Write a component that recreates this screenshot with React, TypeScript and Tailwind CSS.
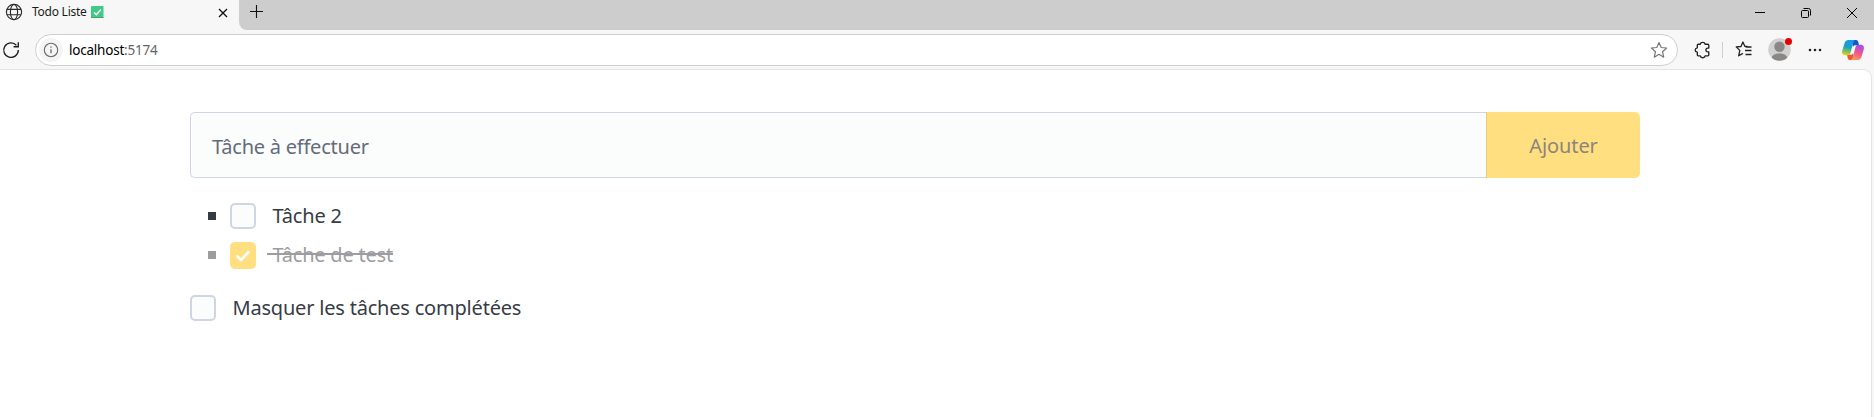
import React from "react";

function GlobeIcon() {
  return (
    <svg width="18" height="18" viewBox="0 0 18 18" fill="none" stroke="#2b2b2b" strokeWidth="1.15">
      <circle cx="9" cy="9" r="7.6" />
      <ellipse cx="9" cy="9" rx="3.6" ry="7.6" />
      <path d="M2 6.3h14M2 11.7h14" />
    </svg>
  );
}

function CheckEmoji() {
  return (
    <svg width="13" height="12" viewBox="0 0 13 12">
      <rect x="0" y="0" width="12.5" height="12" rx="0.8" fill="#41c988" />
      <rect x="0" y="11" width="12.5" height="1" fill="#4fa070" />
      <path d="M3 6.4l2.3 2.3 4.7-5.2" fill="none" stroke="#fff" strokeWidth="1.3" />
    </svg>
  );
}

function TabStrip() {
  return (
    <div className="flex h-[30px] bg-[#f7f7f7]">
      <div className="flex h-6 w-[239px] items-center">
        <div className="ml-[5px] w-[18px]"><GlobeIcon /></div>
        <span className="ml-[9px] w-[54px] whitespace-nowrap text-[12px] leading-6 tracking-[-0.25px] text-[#1b1b1b]">Todo Liste</span>
        <div className="ml-[5px]"><CheckEmoji /></div>
        <svg className="ml-[114px] mt-px" width="10" height="10" viewBox="0 0 10 10" fill="none" stroke="#111" strokeWidth="1.3">
          <path d="M1 1l8 8M9 1l-8 8" />
        </svg>
      </div>
      <div className="flex h-[30px] flex-1 rounded-bl-[8px] bg-[#cdcdcd]">
        <svg className="ml-[10px] mt-[4px]" width="15" height="15" viewBox="0 0 15 15" fill="none" stroke="#111" strokeWidth="1.1">
          <path d="M7.5 1v13M1 7.5h13" />
        </svg>
        <div className="ml-auto flex h-[26px] items-center">
          <svg width="10" height="10" viewBox="0 0 10 10" stroke="#000"><path d="M0 4.5h10" /></svg>
          <svg className="ml-[36px]" width="10" height="10" viewBox="0 0 10 10" fill="none" stroke="#000">
            <rect x="0.5" y="2.5" width="7" height="7" rx="1" />
            <path d="M2.5 0.5h5a2 2 0 0 1 2 2v5" />
          </svg>
          <svg className="ml-[36px] mr-[17px]" width="10" height="10" viewBox="0 0 10 10" stroke="#000"><path d="M0 0l10 10M10 0L0 10" /></svg>
        </div>
      </div>
    </div>
  );
}

function CopilotIcon() {
  return (
    <svg width="22" height="20" viewBox="0 0 22 20">
      <defs>
        <linearGradient id="cool" x1="0.5" y1="0" x2="0.3" y2="1">
          <stop offset="0" stopColor="#149ae8" />
          <stop offset="0.45" stopColor="#1aa0c8" />
          <stop offset="0.72" stopColor="#6cc067" />
          <stop offset="1" stopColor="#f2cb16" />
        </linearGradient>
        <linearGradient id="warm" x1="0.7" y1="0" x2="0.3" y2="1">
          <stop offset="0" stopColor="#a54cf0" />
          <stop offset="0.5" stopColor="#ee5590" />
          <stop offset="1" stopColor="#ff9a55" />
        </linearGradient>
      </defs>
      <path d="M8.5 7h5l-1.5 6.5H8z" fill="#fff" />
      <path d="M10 0h4c1.3 0 1.9.8 2.2 1.8L17 5.200h-3.800c-1.200 0-1.800.6-2.200 2z" fill="#1554cb" />
      <path d="M12 20H8c-1.300 0-1.900-.8-2.200-1.800L5 14.800h3.800c1.200 0 1.800-.6 2.200-2z" fill="#ee5539" />
      <path d="M6.500 0h7c-1.200.300-1.700 1.200-2.100 2.500L8.600 12.500c-.5 1.800-1.300 2.700-2.900 2.700H3C.5 15.200-.3 13 .2 10.800L2.600 3C3.300 1 4.500 0 6.500 0z" fill="url(#cool)" />
      <path d="M15.500 20h-7c1.200-.3 1.700-1.200 2.100-2.500l2.800-10c.5-1.800 1.300-2.700 2.900-2.700H19c2.500 0 3.300 2.200 2.800 4.400L19.400 17c-.7 2-1.900 3-3.900 3z" fill="url(#warm)" />
      <path d="M11.200 6.800h1.900l-1.900 6.400H8.900z" fill="#fff" />
    </svg>
  );
}

function Toolbar() {
  return (
    <div className="flex h-[39px] items-center bg-[#f7f7f7]">
      <svg className="ml-[2px]" width="18" height="18" viewBox="0 0 18 18" fill="none" stroke="#1f1f1f" strokeWidth="1.35">
        <path d="M16.300 9A7.300 7.300 0 1 1 14.400 4.200M16.300 1.200v4.500h-4.700" />
      </svg>
      <div className="ml-[15px] mt-[1px] flex h-8 w-[1643px] items-center rounded-full border border-[#cfcfcf] bg-white">
        <div className="ml-[3px] flex size-6 items-center justify-center rounded-full bg-[#f4f4f4]">
          <svg width="16" height="16" viewBox="0 0 16 16" fill="none" stroke="#6b6b6b" strokeWidth="1.1">
            <circle cx="8" cy="8" r="6.700" />
            <path d="M8 7.200v4M8 4.500v1.300" strokeWidth="1.3" />
          </svg>
        </div>
        <span className="ml-[6px] text-[13.5px] leading-[30px] tracking-[-0.22px] text-black">
          localhost<span className="text-[#666]">:5174</span>
        </span>
        <svg className="ml-auto mr-[9px]" width="18" height="18" viewBox="0 0 18 18" fill="none" stroke="#767676" strokeWidth="1.2" strokeLinejoin="round">
          <path d="M9 1.500l2.200 5 5.400.5-4.100 3.700 1.200 5.500L9 13.300l-4.700 2.900 1.200-5.500L1.400 7l5.400-.5z" />
        </svg>
      </div>
      <svg className="ml-[16px]" width="17" height="18" viewBox="0 0 17 18" fill="none" stroke="#222" strokeWidth="1.35" strokeLinejoin="round">
        <path d="M4.300 3.200h2C6.500 1.800 7.500 1.300 8.700 1.300s2.200.5 2.400 1.900h2.700q1 0 1 1v2.900h-1c-2.500 0-2.500 3.800 0 3.800h1v2.900q0 1-1 1h-2.700c-.2 1.400-1.200 1.900-2.400 1.900s-2.200-.5-2.400-1.900h-2q-1 0-1-1v-2.600C1.900 11 1.200 10.200 1.200 9s.7-2 2.100-2.200V4.200q0-1 1-1z" />
      </svg>
      <div className="ml-[11px] h-4 w-px bg-[#cfcfcf]" />
      <svg className="ml-[12px]" width="17" height="17" viewBox="0 0 17 17" fill="none" stroke="#222" strokeWidth="1.3" strokeLinejoin="round">
        <path d="M12.500 5.500L9.800 5.300 7.900 1 6 5.500l-4.800.4 3.600 3.500-1.100 5.400 4.200-2.400M10.500 6h6M10 9.500h6.500M10.500 13.500h6" />
      </svg>
      <div className="relative ml-[15.5px] size-[23px]">
        <svg width="23" height="23" viewBox="0 0 23 23">
          <defs><clipPath id="avatar"><circle cx="11.5" cy="11.5" r="11.3" /></clipPath></defs>
          <g clipPath="url(#avatar)">
            <rect width="23" height="23" fill="#d2d0ce" />
            <circle cx="11.5" cy="8.7" r="5.2" fill="#8a8886" />
            <ellipse cx="11.5" cy="20.5" rx="8" ry="5.2" fill="#8a8886" />
          </g>
        </svg>
        <span className="absolute left-[17px] top-0 size-[7px] rounded-full bg-[#e80000]" />
      </div>
      <svg className="ml-[17.5px]" width="14" height="4" viewBox="0 0 14 4" fill="#222">
        <circle cx="2" cy="2" r="1.3" /><circle cx="7" cy="2" r="1.3" /><circle cx="12" cy="2" r="1.3" />
      </svg>
      <div className="ml-[20px]"><CopilotIcon /></div>
    </div>
  );
}

function Box({ checked = false }: { checked?: boolean }) {
  if (checked) {
    return (
      <span className="flex h-[27px] w-[26px] shrink-0 items-center justify-center rounded-[5px] bg-[#ffdf80]">
        <svg width="16" height="14" viewBox="0 0 16 14" fill="none" stroke="#fff" strokeWidth="2.6" strokeLinecap="round" strokeLinejoin="round">
          <path d="M2.500 7.500l3.500 3.500 7.500-8" />
        </svg>
      </span>
    );
  }
  return <span className="size-[26px] shrink-0 rounded-[5px] border-2 border-[#cfd5e2] bg-[#fbfcfc]" />;
}

export default function App() {
  return (
    <div className="h-[417px] w-[1874px] overflow-hidden bg-[#f7f7f7] font-['Noto_Sans',sans-serif]">
      <TabStrip />
      <Toolbar />
      <main className="h-[348px] w-[1872px] rounded-tr-[9px] border-r border-t border-[#e4e4e4] bg-white pl-[190px] pt-[42px] text-[20px] text-[#373c44]">
        <form className="flex h-[66px] w-[1450px]">
          <div className="flex w-[1296px] items-center rounded-l-[5px] border border-r-0 border-[#cfd5e2] bg-[#fbfcfc] pl-[21px] pt-[3px] text-[#646b79]">
            <span className="leading-6 tracking-[-0.23px]">Tâche à effectuer</span>
          </div>
          <button type="button" className="flex w-[154px] items-center justify-center rounded-r-[5px] border-l border-[#edca78] bg-[#ffdf80] pt-[2px] text-[#8b857b]">
            <span className="leading-6 tracking-[-0.1px]">Ajouter</span>
          </button>
        </form>
        <ul className="mt-[25px]">
          <li className="flex h-[26px] items-start">
            <span className="ml-[18px] mt-[9px] size-2 bg-[#373c44]" />
            <span className="ml-[14px] flex"><Box /></span>
            <span className="ml-[16.5px] mt-px leading-6 tracking-[-0.2px]">Tâche 2</span>
          </li>
          <li className="mt-[13px] flex h-[27px] items-start">
            <span className="ml-[18px] mt-[9px] size-2 bg-[#9b9da1]" />
            <span className="ml-[14px] flex"><Box checked /></span>
            <span className="relative ml-[16.5px] mt-px leading-6 tracking-[-0.22px] text-[#9b9da1]">
              Tâche de test
              <span className="absolute -left-[6px] right-0 top-[10px] h-[2px] bg-[#9b9da1]" />
            </span>
          </li>
        </ul>
        <label className="mt-[26px] flex h-[26px] items-start">
          <Box />
          <span className="ml-[16.5px] mt-px leading-6 tracking-[-0.2px]">Masquer les tâches complétées</span>
        </label>
      </main>
    </div>
  );
}
